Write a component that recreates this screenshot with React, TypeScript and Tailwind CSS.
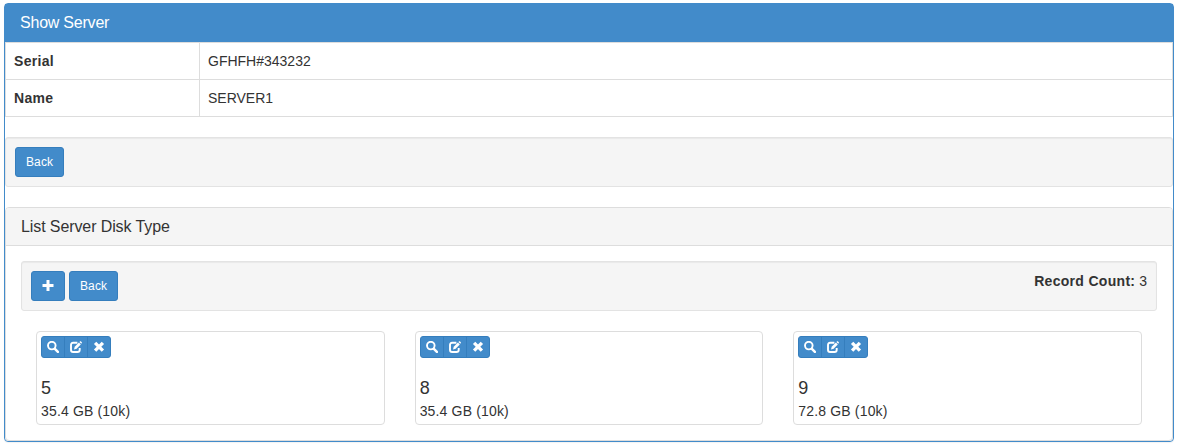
import type { ReactNode } from 'react';

const disks = [
  { id: '5', label: '35.4 GB (10k)' },
  { id: '8', label: '35.4 GB (10k)' },
  { id: '9', label: '72.8 GB (10k)' },
];

const details = [
  { name: 'Serial', value: 'GFHFH#343232' },
  { name: 'Name', value: 'SERVER1' },
];

function SearchIcon() {
  return (
    <svg className="h-3 w-3" viewBox="0 0 12 12" fill="none" stroke="currentColor">
      <circle cx="4.8" cy="4.6" r="3.8" strokeWidth="1.9" />
      <path d="M7.9 7.8l3 3" strokeWidth="2.5" strokeLinecap="round" />
    </svg>
  );
}

function EditIcon() {
  return (
    <svg className="h-3 w-3" viewBox="0 0 12 12" fill="none" stroke="currentColor">
      <path d="M7.4 1.8H3.1Q1 1.8 1 4v4.9Q1 11 3.1 11h4.4Q9.7 11 9.7 8.9V7.1" strokeWidth="1.9" />
      <path d="M4 8.4l.7-2.6L8.9 1.6l1.9 1.9-4.2 4.2z" fill="currentColor" stroke="none" />
      <path d="M9.4 1l.8-.7q.3-.3.6 0l1 1q.3.3 0 .6l-.6.8z" fill="currentColor" stroke="none" />
    </svg>
  );
}

function RemoveIcon() {
  return (
    <svg className="h-3 w-3" viewBox="0 0 12 12" fill="none" stroke="currentColor">
      <path d="M2.1 1.8l7.8 7.8M9.9 1.8l-7.8 7.8" strokeWidth="3.3" />
    </svg>
  );
}

function PlusIcon() {
  return (
    <svg className="h-3 w-3" viewBox="0 0 12 12" fill="currentColor">
      <path d="M4.5 0h3v4h4v3h-4v4h-3V7h-4V4h4z" />
    </svg>
  );
}

function Well({ children }: { children: ReactNode }) {
  return (
    <div className="flex h-[50px] justify-between rounded-[3px] border border-[#e3e3e3] bg-[#f5f5f5] p-[9px] shadow-[inset_0_1px_1px_rgba(0,0,0,0.05)]">
      {children}
    </div>
  );
}

function Button({ children }: { children: ReactNode }) {
  return (
    <button className="flex h-[30px] items-center rounded-[3px] border border-[#357ebd] bg-[#428bca] px-[10px] text-xs leading-[18px] tracking-[0.1px] text-white">
      {children}
    </button>
  );
}

function DiskCard({ id, label }: { id: string; label: string }) {
  return (
    <div className="h-[94px] rounded-[4px] border border-[#dddddd] p-1">
      <div className="flex h-[22px] w-[70px] divide-x divide-[#357ebd] rounded-[3px] border border-[#357ebd] bg-[#428bca] text-white">
        <button aria-label="View" className="flex w-[23px] items-center justify-center pb-px"><SearchIcon /></button>
        <button aria-label="Edit" className="flex w-[23px] items-center justify-center pb-px"><EditIcon /></button>
        <button aria-label="Remove" className="flex w-[22px] items-center justify-center pb-px"><RemoveIcon /></button>
      </div>
      <h4 className="mt-5 text-lg leading-5">{id}</h4>
      <p className="mt-[3px] text-sm leading-5 tracking-[0.16px]">{label}</p>
    </div>
  );
}

export default function App() {
  return (
    <main className="h-[446px] bg-white px-1 pt-[3px] font-['Liberation_Sans',Arial,sans-serif] text-sm text-[#333333]">
      <section className="h-[439px] w-[1170px] rounded-[4px] border border-[#428bca] shadow-[0_1px_1px_rgba(0,0,0,0.05)]">
        <h3 className="h-[38px] bg-[#428bca] pl-[15px] pt-[10px] text-base leading-[18px] tracking-[-0.22px] text-white">Show Server</h3>
        <div className="border-x border-t border-[#dddddd]">
          {details.map((item) => (
            <dl key={item.name} className="flex h-[37px] border-b border-[#dddddd] leading-5">
              <dt className="w-[194px] border-r border-[#dddddd] pl-2 pt-2 font-bold tracking-[0.3px]">{item.name}</dt>
              <dd className="pl-2 pt-2">{item.value}</dd>
            </dl>
          ))}
        </div>
        <div className="mt-5">
          <Well><Button>Back</Button></Well>
        </div>
        <section className="mt-5 h-[234px] rounded-[4px] border border-[#dddddd]">
          <h3 className="h-[38px] rounded-t-[3px] border-b border-[#dddddd] bg-[#f5f5f5] pl-[15px] pt-[10px] text-base leading-[18px] tracking-[-0.1px]">List Server Disk Type</h3>
          <div className="p-[15px]">
            <Well>
              <div className="flex gap-1">
                <Button><PlusIcon /></Button>
                <Button>Back</Button>
              </div>
              <p className="leading-5"><b className="tracking-[0.3px]">Record Count:</b> 3</p>
            </Well>
            <div className="mt-5 grid grid-cols-3 gap-[30px] px-[15px]">
              {disks.map((disk) => <DiskCard key={disk.id} id={disk.id} label={disk.label} />)}
            </div>
          </div>
        </section>
      </section>
    </main>
  );
}
